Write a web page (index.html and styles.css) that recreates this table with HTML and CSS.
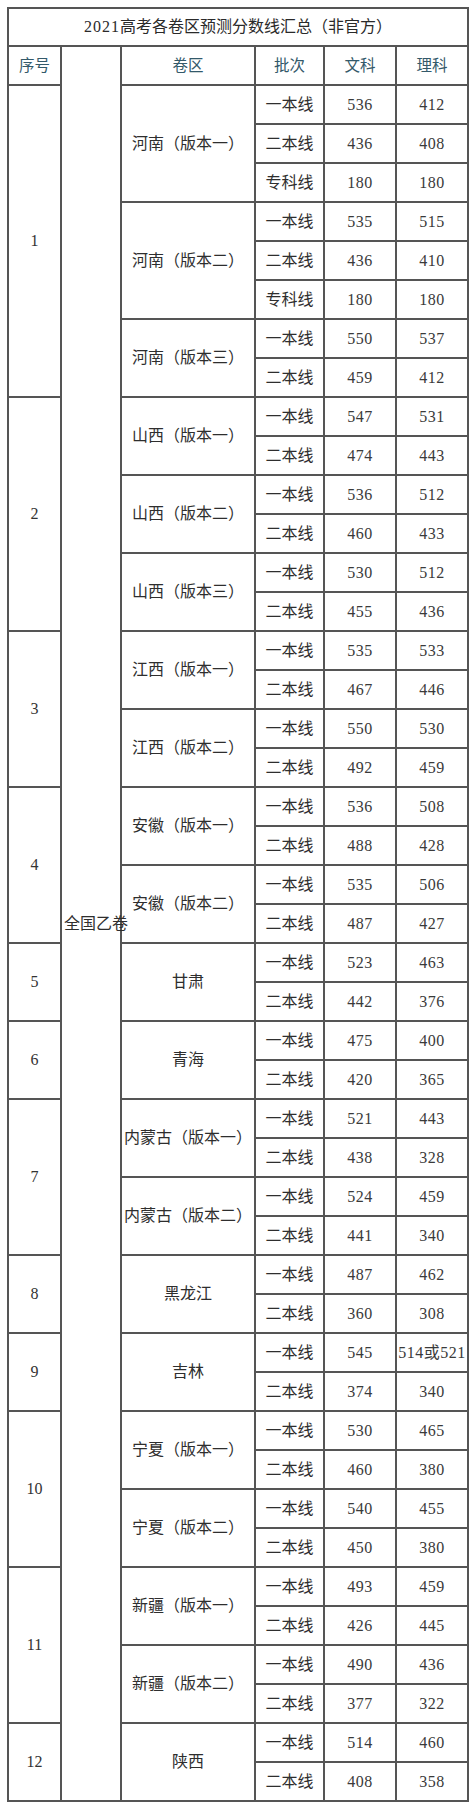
FILE: index.html
```html
<!DOCTYPE html>
<html lang="zh-CN">
<head>
<meta charset="utf-8">
<title>2021高考各卷区预测分数线汇总</title>
<link rel="stylesheet" href="styles.css">
</head>
<body>
<div class="page">
<table class="scores">
<colgroup>
<col class="c-no"><col class="c-paper"><col class="c-region"><col class="c-batch"><col class="c-wen"><col class="c-li">
</colgroup>
<tr class="title-row"><td colspan="6" class="title"><span class="yr">2021</span>高考各卷区预测分数线汇总（非官方）</td></tr>
<tr class="head-row"><th>序号</th><td rowspan="45" class="paper">全国乙卷</td><th>卷区</th><th>批次</th><th>文科</th><th>理科</th></tr>

<tr><td rowspan="8" class="no">1</td><td rowspan="3" class="region">河南（版本一）</td><td>一本线</td><td class="num">536</td><td class="num">412</td></tr>
<tr><td>二本线</td><td class="num">436</td><td class="num">408</td></tr>
<tr><td>专科线</td><td class="num">180</td><td class="num">180</td></tr>
<tr><td rowspan="3" class="region">河南（版本二）</td><td>一本线</td><td class="num">535</td><td class="num">515</td></tr>
<tr><td>二本线</td><td class="num">436</td><td class="num">410</td></tr>
<tr><td>专科线</td><td class="num">180</td><td class="num">180</td></tr>
<tr><td rowspan="2" class="region">河南（版本三）</td><td>一本线</td><td class="num">550</td><td class="num">537</td></tr>
<tr><td>二本线</td><td class="num">459</td><td class="num">412</td></tr>

<tr><td rowspan="6" class="no">2</td><td rowspan="2" class="region">山西（版本一）</td><td>一本线</td><td class="num">547</td><td class="num">531</td></tr>
<tr><td>二本线</td><td class="num">474</td><td class="num">443</td></tr>
<tr><td rowspan="2" class="region">山西（版本二）</td><td>一本线</td><td class="num">536</td><td class="num">512</td></tr>
<tr><td>二本线</td><td class="num">460</td><td class="num">433</td></tr>
<tr><td rowspan="2" class="region">山西（版本三）</td><td>一本线</td><td class="num">530</td><td class="num">512</td></tr>
<tr><td>二本线</td><td class="num">455</td><td class="num">436</td></tr>

<tr><td rowspan="4" class="no">3</td><td rowspan="2" class="region">江西（版本一）</td><td>一本线</td><td class="num">535</td><td class="num">533</td></tr>
<tr><td>二本线</td><td class="num">467</td><td class="num">446</td></tr>
<tr><td rowspan="2" class="region">江西（版本二）</td><td>一本线</td><td class="num">550</td><td class="num">530</td></tr>
<tr><td>二本线</td><td class="num">492</td><td class="num">459</td></tr>

<tr><td rowspan="4" class="no">4</td><td rowspan="2" class="region">安徽（版本一）</td><td>一本线</td><td class="num">536</td><td class="num">508</td></tr>
<tr><td>二本线</td><td class="num">488</td><td class="num">428</td></tr>
<tr><td rowspan="2" class="region">安徽（版本二）</td><td>一本线</td><td class="num">535</td><td class="num">506</td></tr>
<tr><td>二本线</td><td class="num">487</td><td class="num">427</td></tr>

<tr><td rowspan="2" class="no">5</td><td rowspan="2" class="region">甘肃</td><td>一本线</td><td class="num">523</td><td class="num">463</td></tr>
<tr><td>二本线</td><td class="num">442</td><td class="num">376</td></tr>

<tr><td rowspan="2" class="no">6</td><td rowspan="2" class="region">青海</td><td>一本线</td><td class="num">475</td><td class="num">400</td></tr>
<tr><td>二本线</td><td class="num">420</td><td class="num">365</td></tr>

<tr><td rowspan="4" class="no">7</td><td rowspan="2" class="region">内蒙古（版本一）</td><td>一本线</td><td class="num">521</td><td class="num">443</td></tr>
<tr><td>二本线</td><td class="num">438</td><td class="num">328</td></tr>
<tr><td rowspan="2" class="region">内蒙古（版本二）</td><td>一本线</td><td class="num">524</td><td class="num">459</td></tr>
<tr><td>二本线</td><td class="num">441</td><td class="num">340</td></tr>

<tr><td rowspan="2" class="no">8</td><td rowspan="2" class="region">黑龙江</td><td>一本线</td><td class="num">487</td><td class="num">462</td></tr>
<tr><td>二本线</td><td class="num">360</td><td class="num">308</td></tr>

<tr><td rowspan="2" class="no">9</td><td rowspan="2" class="region">吉林</td><td>一本线</td><td class="num">545</td><td class="num">514或521</td></tr>
<tr><td>二本线</td><td class="num">374</td><td class="num">340</td></tr>

<tr><td rowspan="4" class="no">10</td><td rowspan="2" class="region">宁夏（版本一）</td><td>一本线</td><td class="num">530</td><td class="num">465</td></tr>
<tr><td>二本线</td><td class="num">460</td><td class="num">380</td></tr>
<tr><td rowspan="2" class="region">宁夏（版本二）</td><td>一本线</td><td class="num">540</td><td class="num">455</td></tr>
<tr><td>二本线</td><td class="num">450</td><td class="num">380</td></tr>

<tr><td rowspan="4" class="no">11</td><td rowspan="2" class="region">新疆（版本一）</td><td>一本线</td><td class="num">493</td><td class="num">459</td></tr>
<tr><td>二本线</td><td class="num">426</td><td class="num">445</td></tr>
<tr><td rowspan="2" class="region">新疆（版本二）</td><td>一本线</td><td class="num">490</td><td class="num">436</td></tr>
<tr><td>二本线</td><td class="num">377</td><td class="num">322</td></tr>

<tr><td rowspan="2" class="no">12</td><td rowspan="2" class="region">陕西</td><td>一本线</td><td class="num">514</td><td class="num">460</td></tr>
<tr><td>二本线</td><td class="num">408</td><td class="num">358</td></tr>
</table>
</div>
</body>
</html>
```

FILE: styles.css
```css
html, body {
  margin: 0;
  background: #ffffff;
}

.page {
  padding: 7px 0 0 7px;
}

.scores {
  border-collapse: collapse;
  table-layout: fixed;
  width: 460px;
  font-family: "Liberation Serif", "Noto Sans CJK SC", serif;
  color: #2e2e2e;
}

.c-no { width: 53px; }
.c-paper { width: 60px; }
.c-region { width: 134px; }
.c-batch { width: 69px; }
.c-wen { width: 72px; }
.c-li { width: 72px; }

.scores td,
.scores th {
  border: 2px solid #555555;
  padding: 0;
  text-align: center;
  vertical-align: middle;
  font-size: 16px;
  font-weight: normal;
  line-height: 20px;
  white-space: nowrap;
}

.scores tr {
  height: 39px;
}

.scores .title-row {
  height: 38px;
}

.title {
  font-size: 15px;
  color: #2a2a2a;
}

.yr {
  font-size: 16px;
  letter-spacing: 1px;
}

.scores th {
  color: #33596a;
  font-size: 15.5px;
}

.paper {
  text-align: left;
  padding-left: 2px;
  font-size: 15px;
  overflow: visible;
}

.scores .paper {
  text-align: left;
  padding-left: 2px;
}

.region {
  font-size: 15.5px;
}

.num {
  color: #3a3a3a;
  letter-spacing: 0.5px;
}

.no {
  color: #333333;
}
```
